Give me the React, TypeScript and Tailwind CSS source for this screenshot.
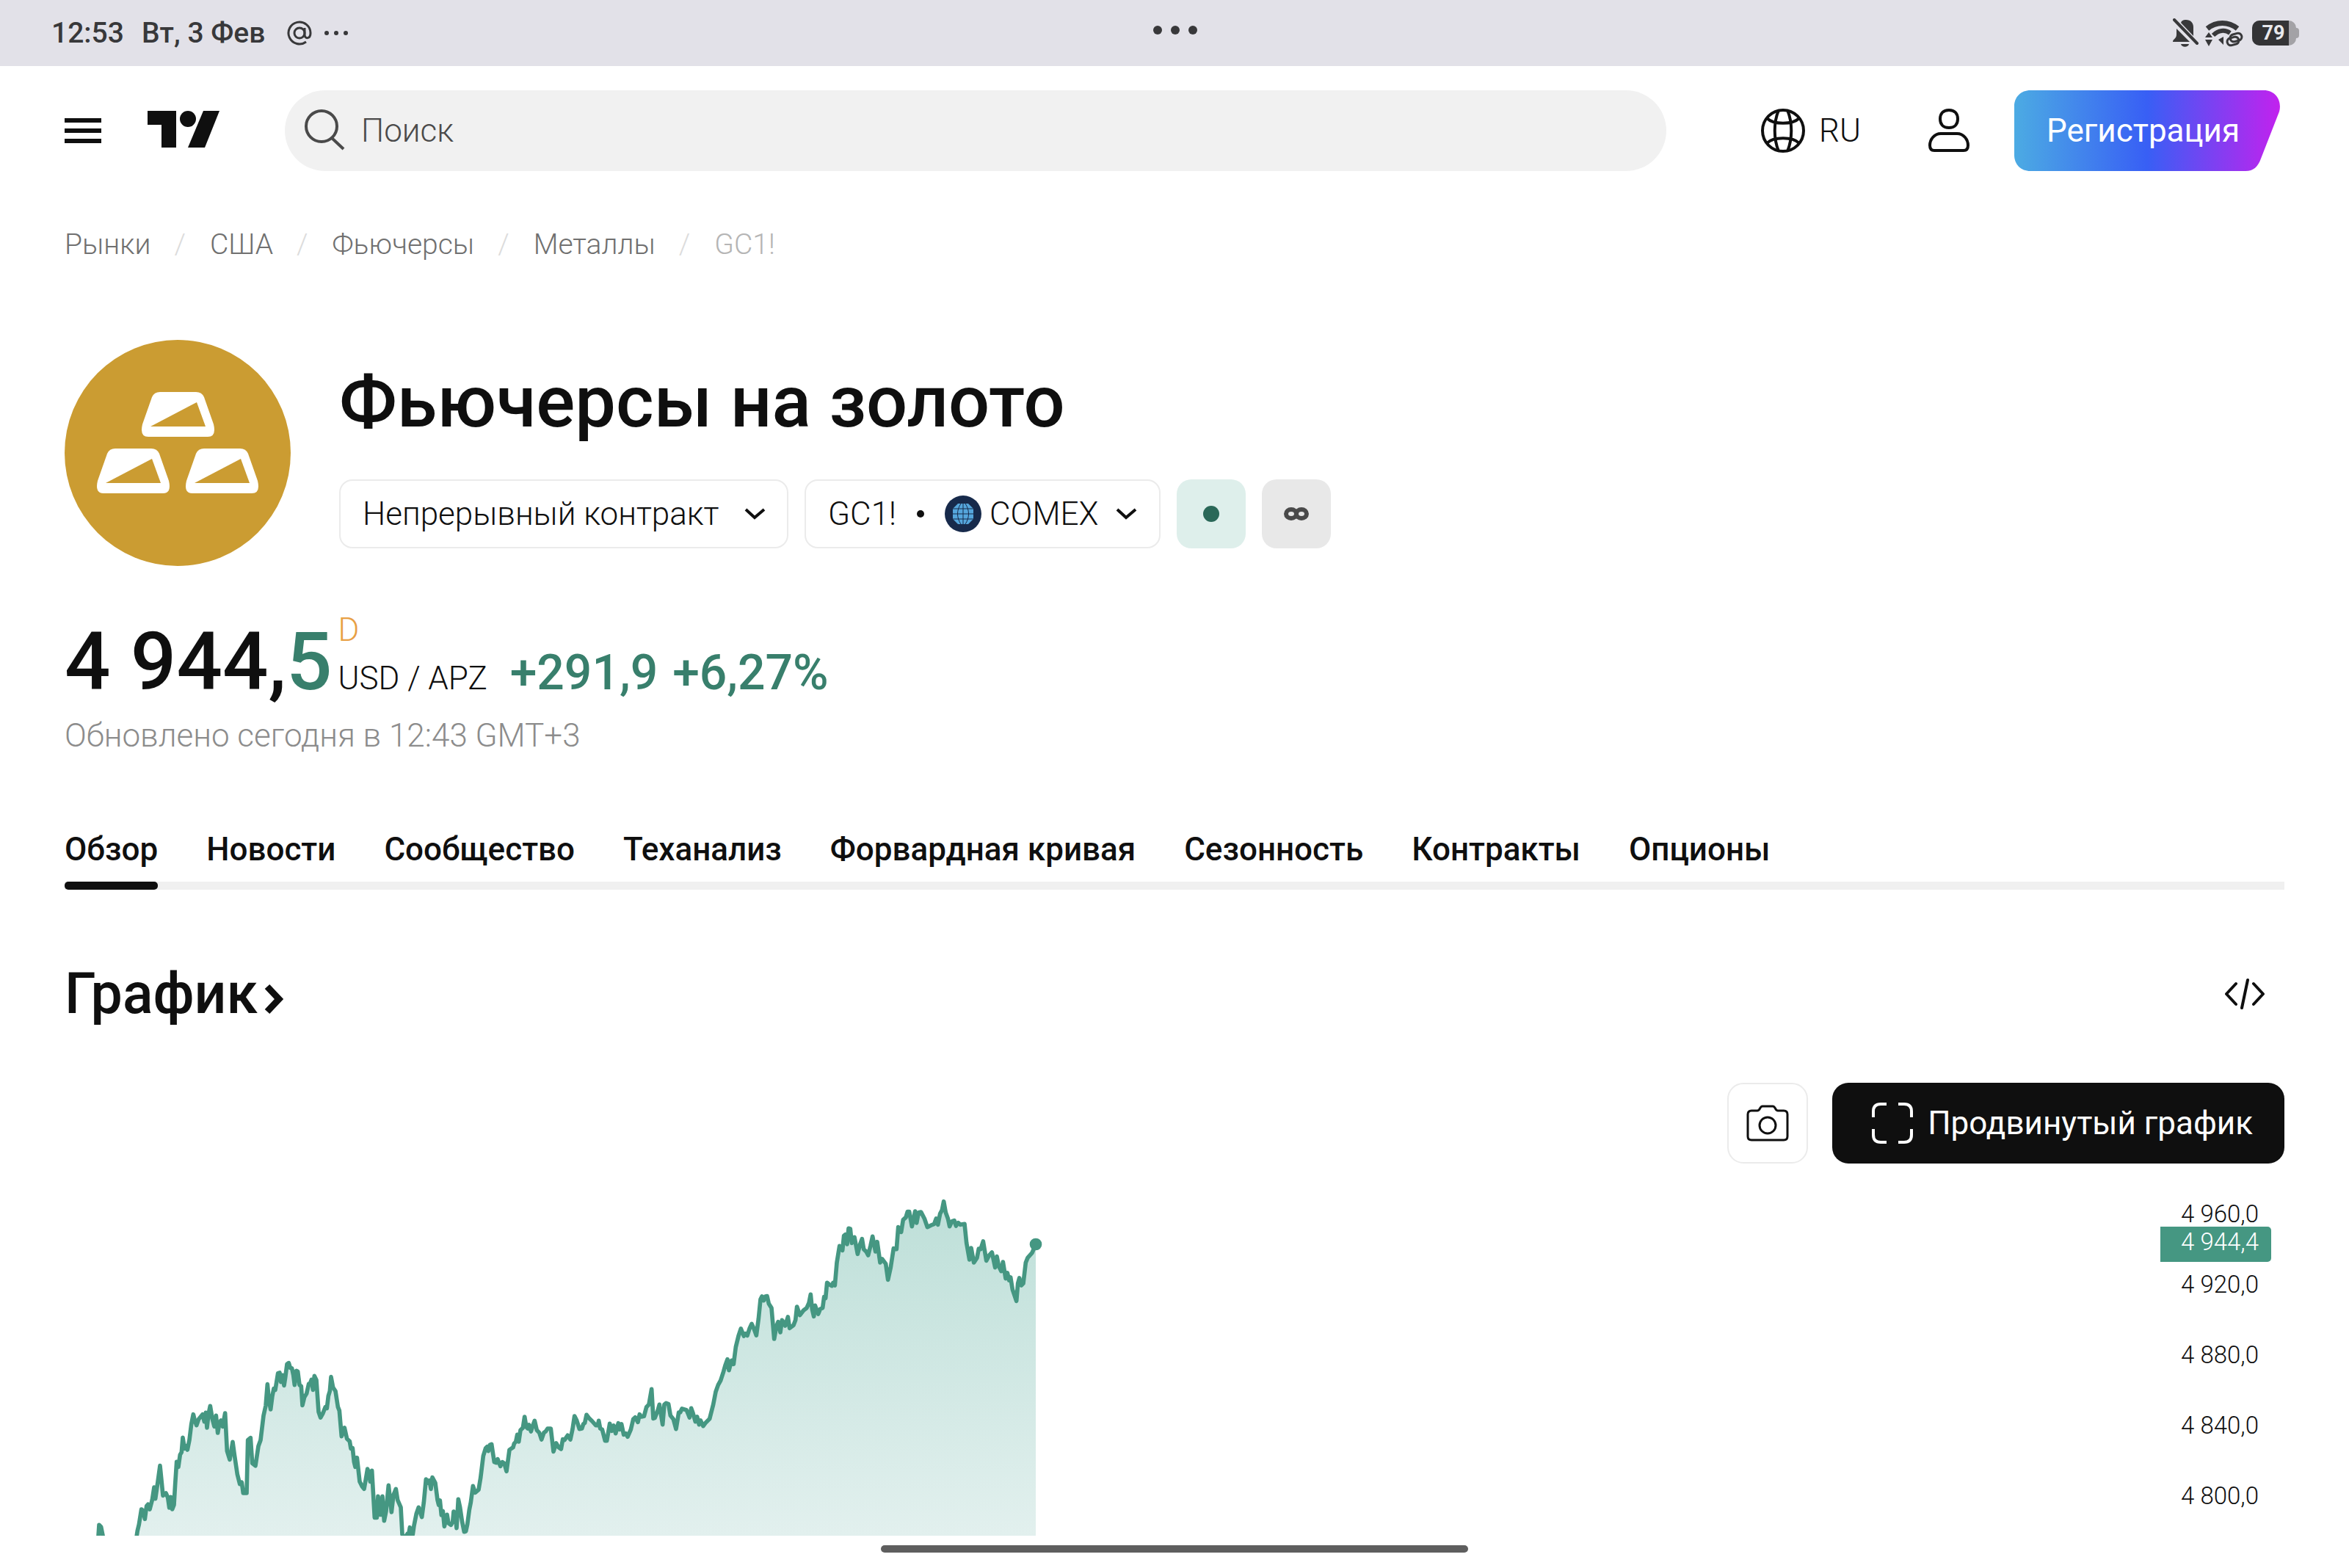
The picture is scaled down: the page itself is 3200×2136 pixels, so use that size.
import React from "react";

type Point = [number, number];

const CRUMBS = ["Рынки", "США", "Фьючерсы", "Металлы"];

const TABS = [
  "Обзор",
  "Новости",
  "Сообщество",
  "Теханализ",
  "Форвардная кривая",
  "Сезонность",
  "Контракты",
  "Опционы",
];

const TICKS = ["4 960,0", "4 920,0", "4 880,0", "4 840,0", "4 800,0"];

// Price path in three consecutive parts, each relative to its own origin.
const SERIES: { x: number; y: number; points: Point[] }[] = [
  {
    x: 36,
    y: 450,
    points: [
      [98, 1000], [105, 892], [113, 900], [125, 960], [140, 1100], [240, 1100], [255, 960], [262, 915], [268, 890],
      [278, 828], [286, 835], [292, 868], [299, 815], [305, 808], [312, 828], [322, 790], [330, 738], [335, 785],
      [345, 715], [354, 650], [361, 720], [366, 772], [378, 762], [386, 780], [392, 822], [398, 778], [404, 828],
      [411, 810], [416, 725], [422, 634], [429, 655], [436, 605], [442, 595], [447, 535], [454, 580], [459, 568],
      [466, 585], [474, 545], [482, 480], [490, 440], [496, 465], [503, 485], [512, 460], [528, 440], [535, 470],
      [541, 433], [546, 495], [552, 440], [559, 406], [568, 460], [576, 490], [583, 445], [590, 516], [597, 475],
      [603, 465], [610, 490], [620, 435], [628, 590], [639, 625], [651, 553], [658, 605], [670, 685], [680, 725],
      [688, 718], [694, 762], [708, 762], [713, 545], [724, 536], [731, 640], [744, 650], [756, 570], [765, 545],
      [777, 445], [786, 405], [793, 317], [799, 380], [806, 420], [813, 365], [819, 335], [825, 340], [836, 272],
      [843, 270], [848, 308], [855, 280], [861, 322], [866, 290], [873, 235], [880, 230], [886, 250], [893, 252],
      [899, 280], [904, 320], [911, 262], [917, 265], [924, 320], [931, 325], [936, 403], [944, 370], [953, 355],
      [962, 315], [967, 315], [973, 298], [979, 340], [985, 283], [993, 300], [1002, 430], [1010, 453], [1020, 435],
      [1030, 410], [1036, 415], [1042, 365], [1048, 345], [1053, 287], [1061, 330], [1071, 345], [1081, 410],
      [1087, 425], [1096, 530], [1108, 495], [1118, 540], [1129, 550], [1134, 580], [1141, 578], [1147, 635],
      [1152, 655], [1159, 617], [1170, 715], [1180, 735], [1188, 745], [1195, 705], [1202, 663], [1209, 685],
      [1213, 715], [1220, 670], [1231, 862], [1240, 862], [1245, 775], [1252, 850], [1257, 850], [1263, 775],
      [1270, 875], [1278, 835], [1288, 730], [1300, 840], [1308, 770], [1318, 745], [1325, 790],
    ],
  },
  {
    x: 1236,
    y: 690,
    points: [
      [138, 580], [144, 690], [152, 710], [165, 688], [170, 690], [175, 662], [180, 690], [187, 690], [192, 655],
      [202, 605], [211, 580], [224, 620], [232, 560], [241, 465], [250, 480], [255, 470], [261, 505], [267, 458],
      [279, 480], [288, 550], [293, 570], [298, 552], [304, 612], [310, 595], [316, 658], [327, 610], [333, 645],
      [343, 652], [350, 640], [354, 597], [360, 605], [366, 665], [373, 547], [380, 580], [388, 635], [397, 680],
      [404, 678], [410, 650], [418, 590], [424, 560], [433, 493], [442, 520], [456, 508], [464, 460], [475, 370],
      [485, 338], [491, 332], [496, 350], [502, 325], [509, 322], [520, 395], [528, 398], [534, 383], [545, 412],
      [553, 395], [561, 400], [570, 433], [582, 345], [597, 335], [601, 320], [608, 312], [614, 283], [620, 312],
      [627, 265], [637, 255], [644, 210], [651, 252], [657, 258], [662, 243], [670, 270], [678, 245], [685, 226],
      [694, 265], [704, 275], [713, 303], [723, 275], [730, 270], [738, 258], [751, 258], [762, 352], [773, 318],
      [783, 335], [793, 342], [800, 302], [807, 305], [820, 286], [831, 303], [840, 260], [848, 207], [857, 225],
      [868, 260], [878, 258], [884, 240], [890, 235], [897, 202], [907, 215], [920, 228], [935, 245], [943, 245],
      [947, 226], [953, 258], [961, 262], [973, 308], [980, 308], [992, 238], [1000, 268], [1008, 246], [1016, 278],
      [1027, 236], [1033, 262], [1040, 240], [1049, 283], [1058, 278], [1065, 292], [1078, 262], [1088, 220],
      [1096, 212], [1107, 232], [1114, 200], [1121, 210], [1132, 208], [1142, 170], [1152, 160], [1163, 97],
      [1170, 217], [1176, 215], [1188, 185], [1195, 160], [1208, 242], [1215, 160], [1222, 154], [1232, 158],
      [1240, 205], [1252, 220], [1263, 260], [1274, 192], [1280, 192], [1287, 177], [1305, 182], [1313, 200],
      [1318, 213],
    ],
  },
  {
    x: 2496,
    y: -30,
    points: [
      [65, 895], [72, 915], [82, 950], [89, 930], [97, 962], [103, 945], [114, 968], [125, 953], [140, 938],
      [155, 880], [165, 828], [175, 800], [185, 782], [197, 745], [204, 720], [213, 695], [219, 740], [230, 700],
      [238, 715], [247, 645], [258, 600], [268, 570], [280, 600], [287, 590], [294, 598], [303, 570], [312, 550],
      [322, 572], [331, 597], [340, 530], [348, 450], [354, 438], [361, 455], [368, 438], [375, 437], [382, 468],
      [393, 485], [404, 612], [413, 560], [420, 542], [429, 585], [436, 535], [443, 545], [449, 558], [460, 522],
      [467, 568], [483, 556], [491, 535], [497, 480], [509, 515], [524, 495], [537, 485], [546, 465], [553, 430],
      [559, 490], [566, 520], [571, 475], [584, 510], [592, 490], [602, 485], [608, 440], [614, 445], [620, 382],
      [630, 390], [640, 395], [645, 382], [652, 393], [660, 300], [671, 232], [683, 250], [689, 190], [695, 185],
      [702, 225], [708, 160], [715, 162], [721, 220], [732, 196], [745, 265], [755, 225], [763, 203], [770, 245],
      [780, 255], [788, 270], [798, 230], [806, 193], [818, 255], [825, 215], [837, 300], [845, 285], [860, 305],
      [869, 370], [880, 320], [892, 242], [904, 245], [911, 155], [923, 175], [931, 125], [942, 115], [949, 92],
      [956, 92], [967, 152], [980, 90], [986, 138], [994, 95], [1004, 93], [1018, 120], [1030, 155], [1046, 147],
      [1058, 142], [1066, 120], [1073, 145], [1082, 100], [1090, 85], [1097, 50], [1105, 95], [1114, 120],
      [1121, 152], [1130, 132], [1140, 128], [1147, 150], [1156, 137], [1165, 145], [1182, 142], [1190, 220],
      [1202, 288], [1209, 240], [1220, 300], [1233, 280], [1240, 243], [1248, 245], [1258, 213], [1271, 292],
      [1283, 270], [1294, 258], [1307, 320], [1314, 275], [1322, 315], [1332, 335], [1339, 297], [1350, 365],
      [1357, 342], [1364, 372], [1370, 360], [1378, 410], [1394, 457], [1400, 385], [1406, 363], [1414, 393],
      [1422, 385], [1432, 300], [1440, 280], [1458, 260], [1473, 225],
    ],
  },
];

const LINE = SERIES.flatMap((part) => part.points.map(([x, y]) => `${x + part.x},${y + part.y}`)).join(" ");

function StatusBar() {
  return (
    <div className="grid h-[90px] grid-cols-[1fr_auto_1fr] items-center bg-[#e2e1e8] pr-[68px] pl-[70px] text-[39px] leading-[48px] font-medium text-[#38383a]">
      <div className="flex items-center">
        <span>12:53</span>
        <span className="ml-[24px]">Вт, 3 Фев</span>
        <svg className="ml-[30px] h-[34px] w-[34px]" viewBox="0 0 34 34" fill="none" stroke="#38383a" strokeWidth="3">
          <circle cx="17" cy="17" r="7" />
          <path d="M24 10v9c0 7 8 6 8-2a15 15 0 1 0-6 12" />
        </svg>
        <svg className="ml-[17px] h-[8px] w-[32px]" viewBox="0 0 32 8" fill="#38383a">
          <circle cx="3" cy="4" r="3" />
          <circle cx="16" cy="4" r="3" />
          <circle cx="29" cy="4" r="3" />
        </svg>
      </div>
      <svg className="mb-[8px] h-[12px] w-[60px]" viewBox="0 0 60 12" fill="#38383a">
        <circle cx="6" cy="6" r="6" />
        <circle cx="30" cy="6" r="6" />
        <circle cx="54" cy="6" r="6" />
      </svg>
      <div className="flex items-center justify-end gap-[8px]">
        <svg className="h-[40px] w-[36px]" viewBox="0 0 36 40" fill="#38383a">
          <path d="M0 32C0 28 5 28 5 22V14L23 32Z" />
          <path d="M11 6C12 3 14 2 18 2C24 2 28 6 28 12V24Z" />
          <path d="M11 35H22C21 40 12 40 11 35Z" />
          <path d="M2 2L33 34" stroke="#38383a" strokeWidth="4" strokeLinecap="round" />
        </svg>
        <svg className="h-[40px] w-[52px]" viewBox="0 0 52 40" fill="none" stroke="#38383a">
          <path d="M3 14C15 4 32 4 44 14" strokeWidth="7" />
          <path d="M11 23C18 16 27 15 34 20" strokeWidth="6" />
          <path d="M0 26L5 19L10 26ZM0 29H10L5 38ZM18 29L25 25V36Z" fill="#38383a" stroke="none" strokeWidth="1" />
          <rect x="34" y="21" width="16" height="10" rx="5" strokeWidth="3" transform="rotate(-15 42 26)" />
          <rect x="30" y="26" width="16" height="10" rx="5" strokeWidth="3" transform="rotate(-15 38 31)" />
        </svg>
        <div className="ml-[4px] flex items-center">
          <div className="flex h-[34px] w-[60px] overflow-hidden rounded-[10px] bg-[#a3a2a6]">
            <span className="flex w-[50px] items-center justify-center bg-[#343436] pl-[8px] text-[27px] leading-[34px] font-bold text-[#e9e9ec]">
              79
            </span>
          </div>
          <div className="h-[14px] w-[4px] rounded-r-[4px] bg-[#a3a2a6]" />
        </div>
      </div>
    </div>
  );
}

function Header() {
  return (
    <header className="flex items-center pt-[33px] pr-[94px] pl-[88px]">
      <button aria-label="Меню" className="flex w-[50px] flex-col gap-[8px]">
        <span className="h-[6px] w-full bg-[#0f0f0f]" />
        <span className="h-[6px] w-full bg-[#0f0f0f]" />
        <span className="h-[6px] w-full bg-[#0f0f0f]" />
      </button>
      <a href="#" aria-label="TradingView" className="mb-[4px] ml-[63px]">
        <svg className="h-[50px] w-[98px]" viewBox="0 0 98 50" fill="#0f0f0f">
          <path d="M0 0H39V50H19V19H0Z" />
          <circle cx="55" cy="11" r="11" />
          <path d="M76 0H98L78 50H55Z" />
        </svg>
      </a>
      <label className="ml-[89px] flex h-[110px] min-w-0 flex-1 items-center rounded-full bg-[#f1f1f1] pl-[26px]">
        <svg className="h-[58px] w-[58px]" viewBox="0 0 58 58" fill="none" stroke="#4a4a4a" strokeWidth="4">
          <circle cx="24" cy="23" r="21" />
          <path d="M38 39L54 54" />
        </svg>
        <input
          aria-label="Поиск"
          placeholder="Поиск"
          className="ml-[20px] min-w-0 flex-1 bg-transparent text-[44px] leading-[52px] font-light text-[#4a4a4a] outline-none placeholder:text-[#4a4a4a] placeholder:opacity-100"
        />
      </label>
      <button className="ml-[128px] flex items-center gap-[18px] text-[44px] leading-[52px] font-light">
        <svg className="h-[62px] w-[62px]" viewBox="0 0 62 62" fill="none" stroke="#0f0f0f" strokeWidth="4">
          <circle cx="31" cy="31" r="28" />
          <path d="M25 3C18 20 18 42 25 59M37 3C44 20 44 42 37 59" />
          <path d="M9 14C18 23 44 23 53 14M9 48C18 39 44 39 53 48" />
        </svg>
        RU
      </button>
      <button aria-label="Профиль" className="ml-[92px]">
        <svg className="h-[60px] w-[56px]" viewBox="0 0 56 60" fill="none" stroke="#0f0f0f" strokeWidth="4">
          <path d="M28 2c8 0 12 5 12 12s-4 12-12 12-12-5-12-12 4-12 12-12Z" />
          <path d="M17 34H39C48 34 54 42 54 50C54 55 52 57 48 57H8C4 57 2 55 2 50C2 42 8 34 17 34Z" />
        </svg>
      </button>
      <button className="relative ml-[61px] flex h-[110px] w-[362px] items-center pl-[44px] text-[44px] leading-[52px] text-white">
        <svg className="absolute inset-0 h-full w-full" viewBox="0 0 362 110" preserveAspectRatio="none">
          <defs>
            <linearGradient id="signup" x1="0" x2="1" y1="0" y2="0">
              <stop offset="0" stopColor="#4cabe3" />
              <stop offset="0.5" stopColor="#385ff5" />
              <stop offset="1" stopColor="#c222ee" />
            </linearGradient>
          </defs>
          <path
            d="M22 0H340C356 0 365 14 361 29L336 93C332 104 326 110 315 110H22C9 110 0 101 0 88V22C0 9 9 0 22 0Z"
            fill="url(#signup)"
          />
        </svg>
        <span className="relative">Регистрация</span>
      </button>
    </header>
  );
}

function Chevron() {
  return (
    <svg className="h-[17px] w-[29px]" viewBox="0 0 29 17" fill="none" stroke="#0f0f0f" strokeWidth="4">
      <path d="M2 2L14 13L27 2" />
    </svg>
  );
}

function GoldBar({ x, y }: { x: number; y: number }) {
  return (
    <g transform={`translate(${x} ${y})`}>
      <path d="M25 0H74Q82 0 85 7L98 44Q102 61 90 61H9Q-3 61 1 44L14 7Q17 0 25 0Z" fill="#fff" />
      <path d="M12 47L75 14L87 47Z" fill="#cb9c32" />
    </g>
  );
}

function SymbolHead() {
  return (
    <section className="mt-[108px] flex gap-[66px]">
      <svg className="h-[308px] w-[308px] shrink-0" viewBox="0 0 308 308">
        <circle cx="154" cy="154" r="154" fill="#cb9c32" />
        <GoldBar x={105} y={71} />
        <GoldBar x={44} y={148} />
        <GoldBar x={165} y={148} />
      </svg>
      <div className="pt-[24px]">
        <h1 className="text-[99px] leading-[120px] font-medium">Фьючерсы на золото</h1>
        <div className="mt-[46px] flex gap-[22px] text-[44px] leading-[52px] font-light">
          <label className="relative flex h-[94px] items-center rounded-[18px] border-2 border-[#ebebeb]">
            <select aria-label="Тип контракта" className="h-full appearance-none bg-transparent pr-[92px] pl-[30px] outline-none">
              <option>Непрерывный контракт</option>
            </select>
            <span className="pointer-events-none absolute right-[29px]">
              <Chevron />
            </span>
          </label>
          <button className="flex h-[94px] items-center rounded-[18px] border-2 border-[#ebebeb] pr-[30px] pl-[30px]">
            GC1!
            <span className="ml-[28px] h-[10px] w-[10px] rounded-full bg-[#0f0f0f]" />
            <svg className="ml-[28px] h-[50px] w-[50px]" viewBox="0 0 50 50">
              <circle cx="25" cy="25" r="25" fill="#172a4b" />
              <path d="M18 11H32L39 18V32L32 39H18L11 32V18Z" fill="#55a6dc" />
              <path
                d="M11 18H39M11 25H39M11 32H39M25 11V39M22 11C16 20 16 30 22 39M28 11C34 20 34 30 28 39"
                fill="none"
                stroke="#172a4b"
              />
            </svg>
            <span className="ml-[11px]">COMEX</span>
            <span className="ml-[24px]">
              <Chevron />
            </span>
          </button>
          <button aria-label="Рынок открыт" className="flex h-[94px] w-[94px] items-center justify-center rounded-[20px] bg-[#deefeb]">
            <span className="h-[22px] w-[22px] rounded-full bg-[#2a6858]" />
          </button>
          <button aria-label="Непрерывный" className="flex h-[94px] w-[94px] items-center justify-center rounded-[20px] bg-[#e8e8e8]">
            <svg className="h-[18px] w-[34px]" viewBox="0 0 34 18" fill="none" stroke="#4a4a4a" strokeWidth="6">
              <ellipse cx="10" cy="9" rx="7" ry="6" />
              <ellipse cx="24" cy="9" rx="7" ry="6" />
            </svg>
          </button>
        </div>
      </div>
    </section>
  );
}

function Quote() {
  return (
    <section>
      <div className="mt-[76px] flex items-end">
        <span className="text-[110px] leading-[110px] font-medium">
          4 944,<span className="text-[#387f6c]">5</span>
        </span>
        <span className="ml-[8px] flex flex-col text-[44px] leading-[66px] font-light">
          <span className="-mt-[22px] text-[#e8a045]">D</span>
          <span>USD / APZ</span>
        </span>
        <span className="ml-[31px] flex gap-[20px] text-[66px] leading-[80px] font-medium text-[#387f6c]">
          <span>+291,9</span>
          <span>+6,27%</span>
        </span>
      </div>
      <p className="mt-[19px] text-[44px] leading-[52px] font-light text-[#8c8c8c]">Обновлено сегодня в 12:43 GMT+3</p>
    </section>
  );
}

function Tabs() {
  return (
    <nav className="mt-[103px] flex gap-[66px] border-b-[11px] border-[#f0f0f0] text-[44px] leading-[52px] font-medium">
      {TABS.map((tab, i) => (
        <a key={tab} href="#" className="-mb-[11px] flex flex-col gap-[18px]">
          {tab}
          {i === 0 && <span className="h-[11px] rounded-[5px] bg-[#0f0f0f]" />}
        </a>
      ))}
    </nav>
  );
}

function Chart() {
  return (
    <section>
      <div className="mt-[98px] flex items-center justify-between pr-[26px]">
        <h2>
          <a href="#" className="flex items-center gap-[9px] text-[77px] leading-[88px] font-medium">
            График
            <svg className="mt-[14px] h-[42px] w-[28px]" viewBox="0 0 28 42" fill="none" stroke="#0f0f0f" strokeWidth="9">
              <path d="M4 4L20 21L4 38" />
            </svg>
          </a>
        </h2>
        <button aria-label="Код для вставки">
          <svg className="h-[44px] w-[56px]" viewBox="0 0 56 44" fill="none" stroke="#0f0f0f" strokeWidth="4" strokeLinecap="round" strokeLinejoin="round">
            <path d="M16 8L3 22L16 36M40 8L53 22L40 36M32 3L24 41" />
          </svg>
        </button>
      </div>
      <div className="mt-[77px] flex justify-end gap-[33px]">
        <button aria-label="Снимок" className="flex h-[110px] w-[110px] items-center justify-center rounded-[22px] border-2 border-[#ebebeb]">
          <svg className="h-[50px] w-[58px]" viewBox="0 0 58 50" fill="none" stroke="#0f0f0f" strokeWidth="3">
            <path d="M7 8H15C19 8 18 2 22 2H36C40 2 39 8 43 8H51Q56 8 56 13V43Q56 48 51 48H7Q2 48 2 43V13Q2 8 7 8Z" />
            <circle cx="29" cy="28" r="11" />
          </svg>
        </button>
        <button className="flex h-[110px] items-center gap-[20px] rounded-[22px] bg-[#0f0f0f] pr-[43px] pl-[54px] text-[44px] leading-[52px] text-white">
          <svg className="h-[56px] w-[56px]" viewBox="0 0 56 56" fill="none" stroke="#fff" strokeWidth="4">
            <path d="M2 20V12Q2 2 12 2H20M36 2H44Q54 2 54 12V20M54 36V44Q54 54 44 54H36M20 54H12Q2 54 2 44V36" />
          </svg>
          Продвинутый график
        </button>
      </div>
      <div className="mt-[45px] flex justify-between">
        <svg className="h-[462px] w-[1342px]" viewBox="0 0 4026 1386">
          <defs>
            <linearGradient id="area" x1="0" x2="0" y1="0" y2="1386" gradientUnits="userSpaceOnUse">
              <stop offset="0" stopColor="#bddfd8" />
              <stop offset="1" stopColor="#e2f0ee" />
            </linearGradient>
          </defs>
          <polygon points={`134,1700 ${LINE} 3969,1700`} fill="url(#area)" />
          <polyline points={LINE} fill="none" stroke="#459782" strokeWidth="17" strokeLinecap="round" strokeLinejoin="round" />
          <circle cx="3969" cy="195" r="25" fill="#459782" />
        </svg>
        <div className="relative mr-[18px] flex w-[151px] flex-col items-end gap-[60px] pt-[6px] pr-[17px] text-[33px] leading-[36px] font-light">
          {TICKS.map((tick) => (
            <span key={tick}>{tick}</span>
          ))}
          <span className="absolute top-[41px] right-0 flex h-[48px] w-full justify-end rounded-r-[5px] bg-[#459782] pt-[3px] pr-[17px] text-white">
            4 944,4
          </span>
        </div>
      </div>
    </section>
  );
}

export default function App() {
  return (
    <div className="overflow-hidden bg-white font-[Roboto,sans-serif] text-[#0f0f0f]">
      <StatusBar />
      <Header />
      <main className="pr-[88px] pl-[88px]">
        <nav className="mt-[78px] flex text-[39px] leading-[44px] font-light text-[#707070]">
          {CRUMBS.map((crumb) => (
            <React.Fragment key={crumb}>
              <a href="#">{crumb}</a>
              <span className="mr-[33px] ml-[32px] text-[#dcdcdc]">/</span>
            </React.Fragment>
          ))}
          <span className="text-[#b5b5b5]">GC1!</span>
        </nav>
        <SymbolHead />
        <Quote />
        <Tabs />
        <Chart />
      </main>
      <div className="mx-auto mt-[13px] mb-[21px] h-[10px] w-[800px] rounded-full bg-[#5e5e5e]" />
    </div>
  );
}
